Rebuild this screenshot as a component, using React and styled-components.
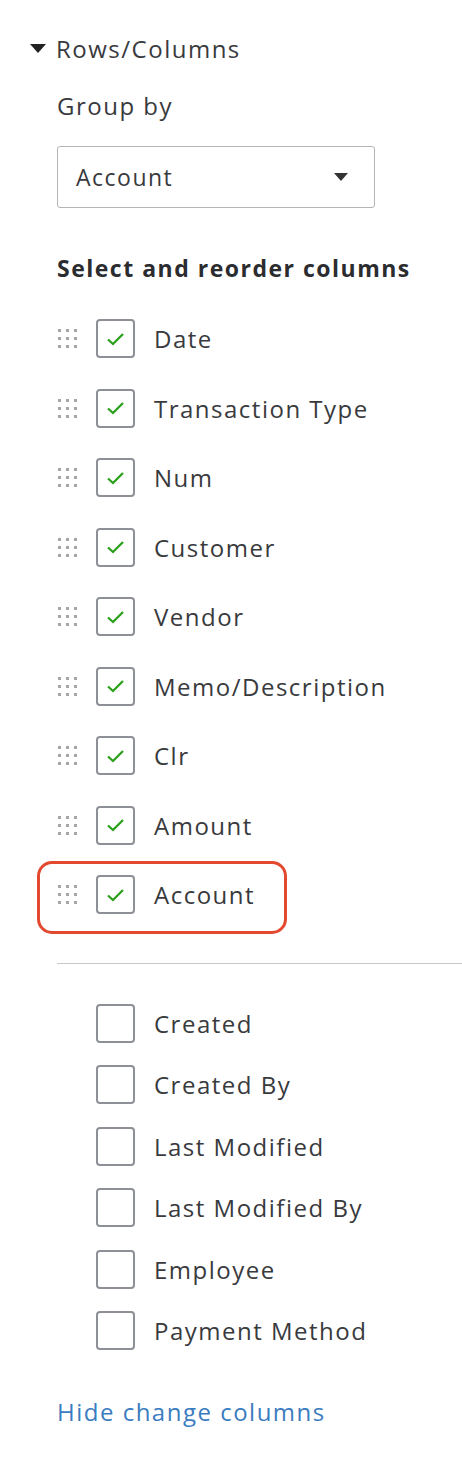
import React from 'react';
import styled, { createGlobalStyle } from 'styled-components';

const GlobalStyle = createGlobalStyle`
  body {
    margin: 0;
    background: #fff;
    font-family: "Open Sans", Lato, sans-serif;
    color: #393a3d;
    letter-spacing: 1.5px;
  }
`;

const Panel = styled.div`
  width: 462px;
  padding-top: 30px;
`;

const SectionHeader = styled.div`
  display: flex;
  align-items: center;
  gap: 10px;
  padding-left: 30px;
  height: 36px;
  font-size: 24px;
`;

const Caret = styled.span`
  width: 0;
  height: 0;
  border-left: 8.5px solid transparent;
  border-right: 8.5px solid transparent;
  border-top: 9px solid #222;
`;

const Body = styled.div`
  padding-left: 57px;
`;

const Label = styled.div`
  font-size: 24px;
  height: 36px;
  line-height: 36px;
  margin-top: 22px;
`;

const Select = styled.div`
  margin-top: 22px;
  width: 318px;
  height: 62px;
  box-sizing: border-box;
  border: 1px solid #b5b5b5;
  border-radius: 3px;
  display: flex;
  align-items: center;
  justify-content: space-between;
  padding: 0 26px 0 18px;
  font-size: 23px;
`;

const SelectArrow = styled.span`
  width: 0;
  height: 0;
  border-left: 7.5px solid transparent;
  border-right: 7.5px solid transparent;
  border-top: 8px solid #333;
`;

const Heading = styled.div`
  margin-top: 42px;
  font-size: 23px;
  font-weight: 700;
  height: 36px;
  line-height: 36px;
  color: #2b2c2f;
`;

const List = styled.div`
  margin-top: ${({ $top }) => $top || 0}px;
  display: flex;
  flex-direction: column;
`;

const Row = styled.div`
  position: relative;
  display: flex;
  align-items: center;
  height: ${({ $h }) => $h}px;
  font-size: 24px;

  &::after {
    content: '';
    display: ${({ $highlight }) => ($highlight ? 'block' : 'none')};
    position: absolute;
    left: -20px;
    top: 1px;
    width: 250px;
    height: 73px;
    box-sizing: border-box;
    border: 3px solid #e2492f;
    border-radius: 15px;
  }
`;

const Handle = styled.span`
  width: 20px;
  margin-left: 1px;
  margin-right: 18px;
  display: grid;
  grid-template-columns: repeat(3, 3px);
  grid-template-rows: repeat(3, 3px);
  gap: 5px 5px;
  visibility: ${({ $hidden }) => ($hidden ? 'hidden' : 'visible')};

  i {
    display: block;
    width: 3px;
    height: 3px;
    background: #a6a6a6;
  }
`;

const Box = styled.span`
  width: 39px;
  height: 39px;
  box-sizing: border-box;
  border: 2px solid #8d9096;
  border-radius: 4px;
  display: flex;
  align-items: center;
  justify-content: center;
  flex: none;
`;

const RowText = styled.span`
  margin-left: 19px;
`;

const Divider = styled.hr`
  margin: 33px 0 29px;
  border: none;
  border-top: 1px solid #c8c8c8;
`;

const HideLink = styled.a`
  display: block;
  margin-top: 33px;
  font-size: 24px;
  color: #3a7cc0;
  text-decoration: none;
`;

const Check = () => (
  <svg width="19" height="14" viewBox="0 0 19 14">
    <path d="M2 7.5 L7 12 L17 2" fill="none" stroke="#2ca01c" strokeWidth="2.3" />
  </svg>
);

const Dots = () => (
  <>
    {Array.from({ length: 9 }).map((_, i) => (
      <i key={i} />
    ))}
  </>
);

const selected = [
  'Date',
  'Transaction Type',
  'Num',
  'Customer',
  'Vendor',
  'Memo/Description',
  'Clr',
  'Amount',
  'Account',
];

const available = [
  'Created',
  'Created By',
  'Last Modified',
  'Last Modified By',
  'Employee',
  'Payment Method',
];

export default function App() {
  return (
    <>
      <GlobalStyle />
      <Panel>
        <SectionHeader>
          <Caret />
          Rows/Columns
        </SectionHeader>
        <Body>
          <Label>Group by</Label>
          <Select>
            Account
            <SelectArrow />
          </Select>
          <Heading>Select and reorder columns</Heading>
          <List $top={18}>
            {selected.map((name) => (
              <Row key={name} $h={69.5} $highlight={name === 'Account'}>
                <Handle>
                  <Dots />
                </Handle>
                <Box>
                  <Check />
                </Box>
                <RowText>{name}</RowText>
              </Row>
            ))}
          </List>
          <Divider />
          <List>
            {available.map((name) => (
              <Row key={name} $h={61.5}>
                <Handle $hidden>
                  <Dots />
                </Handle>
                <Box />
                <RowText>{name}</RowText>
              </Row>
            ))}
          </List>
          <HideLink href="#">Hide change columns</HideLink>
        </Body>
      </Panel>
    </>
  );
}
